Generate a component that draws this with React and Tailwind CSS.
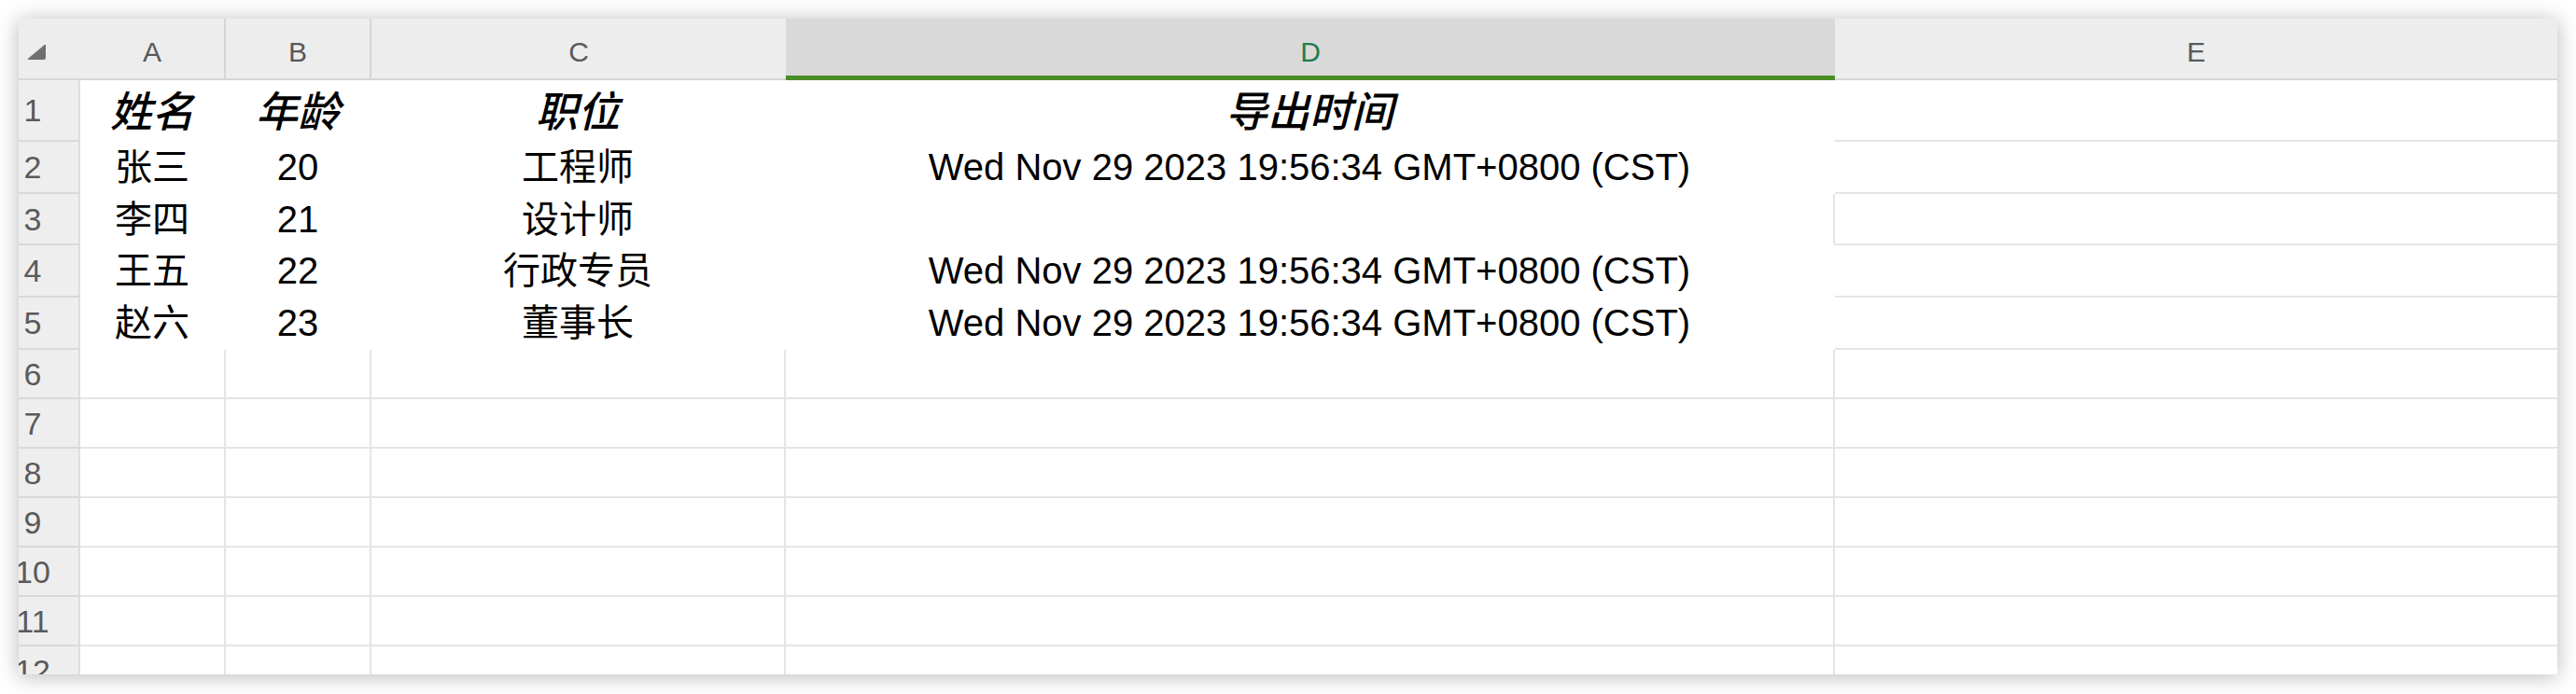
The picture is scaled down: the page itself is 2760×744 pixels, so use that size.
import React from "react";

const DATE = "Wed Nov 29 2023 19:56:34 GMT+0800 (CST)";

const rows = [
  { h: "h-[66px]", cells: ["姓名", "年龄", "职位", "导出时间"], head: true },
  { h: "h-[56px]", cells: ["张三", "20", "工程师", DATE] },
  { h: "h-[55px]", cells: ["李四", "21", "设计师", ""], dRight: true },
  { h: "h-[56px]", cells: ["王五", "22", "行政专员", DATE] },
  { h: "h-[56px]", cells: ["赵六", "23", "董事长", DATE] },
  { h: "h-[53px]" },
  { h: "h-[53px]" },
  { h: "h-[53px]" },
  { h: "h-[53px]" },
  { h: "h-[53px]" },
  { h: "h-[53px]" },
  { h: "h-[53px]" },
];

const colW = ["w-[156px]", "w-[156px]", "w-[444px]", "w-[1124px]"];

const font = { fontFamily: '"Liberation Sans", "Noto Sans CJK SC", sans-serif' };

function Cell({ w, rightVisible, bottomVisible, children, head }) {
  return (
    <div
      className={`${w} shrink-0 h-full flex items-center justify-center border-r-2 border-b-2 ${
        rightVisible ? "border-r-[#e5e5e5]" : "border-r-white"
      } ${bottomVisible ? "border-b-[#e5e5e5]" : "border-b-white"} ${
        head ? "italic font-medium text-[45px] pt-[4px]" : "text-[40px]"
      } text-black leading-none whitespace-nowrap`}
    >
      {children}
    </div>
  );
}

export default function App() {
  return (
    <div className="w-[2760px] h-[744px] bg-white p-[20px]" style={font}>
      <div className="w-[2720px] h-[703px] overflow-hidden bg-white shadow-[0_2px_22px_rgba(0,0,0,0.28)] flex flex-col">
        {/* column header */}
        <div className="flex h-[66px] shrink-0 bg-[#ededed] text-[30px] text-[#595959] leading-none">
          <div className="w-[66px] shrink-0 h-full border-b-2 border-[#d6d6d6] flex items-start pl-[9px] pt-[27px]">
            <svg width="20" height="17" viewBox="0 0 20 17">
              <path
                d="M18.5 1.2 Q20 0 20 2 L20 15 Q20 17 18 17 L2 17 Q0 17 1.4 15.6 Z"
                fill="#6f6f6f"
              />
            </svg>
          </div>
          <div className="w-[156px] shrink-0 h-full border-r-2 border-b-2 border-[#d6d6d6] flex items-center justify-center pt-2">
            A
          </div>
          <div className="w-[156px] shrink-0 h-full border-r-2 border-b-2 border-[#d6d6d6] flex items-center justify-center pt-2">
            B
          </div>
          <div className="w-[444px] shrink-0 h-full border-b-2 border-[#d6d6d6] flex items-center justify-center pt-2">
            C
          </div>
          <div className="w-[1124px] shrink-0 h-full bg-[#d9d9d9] border-b-[5px] border-[#4a8d29] flex items-center justify-center pt-[11px] text-[#1f7d4f]">
            D
          </div>
          <div className="flex-1 h-full border-b-2 border-[#d6d6d6] flex items-center justify-center pt-2">
            E
          </div>
        </div>

        {rows.map((r, i) => {
          const filled = i < 5;
          return (
            <div key={i} className={`flex ${r.h} shrink-0`}>
              <div className="w-[66px] shrink-0 h-full bg-[#eeeeee] border-r-2 border-b-2 border-r-[#dedede] border-b-[#d9d9d9] flex items-center">
                <div className="w-[30px] flex justify-center text-[34px] leading-none text-[#5a5a5a] overflow-visible whitespace-nowrap">
                  {i + 1}
                </div>
              </div>
              {colW.map((w, c) => {
                let rightVisible = !filled;
                let bottomVisible = !filled;
                if (filled && c === 3 && r.dRight) rightVisible = true;
                return (
                  <Cell
                    key={c}
                    w={w}
                    head={r.head}
                    rightVisible={rightVisible}
                    bottomVisible={bottomVisible}
                  >
                    {r.cells ? r.cells[c] : ""}
                  </Cell>
                );
              })}
              <div className="flex-1 h-full border-b-2 border-[#e5e5e5]" />
            </div>
          );
        })}
      </div>
    </div>
  );
}
